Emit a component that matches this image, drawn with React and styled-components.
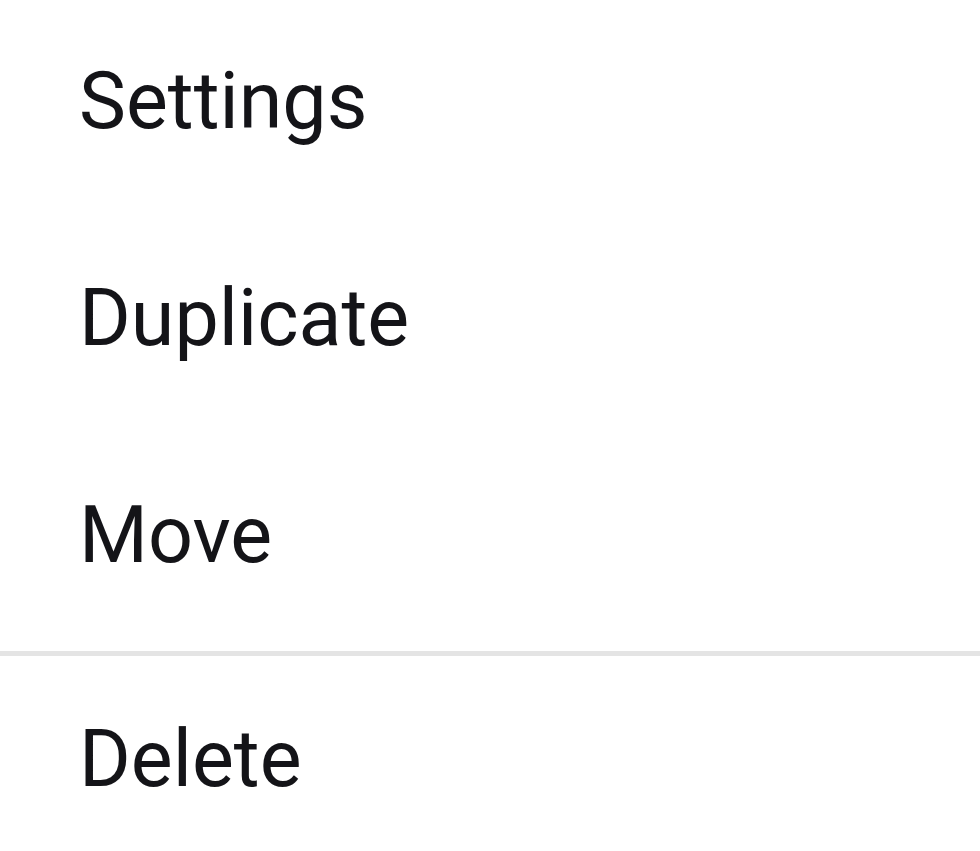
import styled, { createGlobalStyle } from "styled-components"

const Global = createGlobalStyle`
    html, body {
        margin: 0;
        padding: 0;
        background: #ffffff;
    }
`

const Menu = styled.ul`
    list-style: none;
    margin: 0;
    padding: 0;
    width: 980px;
    font-family: Roboto, "Noto Sans", sans-serif;
`

const Item = styled.li`
    display: flex;
    align-items: center;
    height: 217px;
    padding: ${props => props.last ? '4px' : '0'} 0 15px 79px;
    box-sizing: border-box;
    font-size: 79px;
    line-height: 1;
    color: #141418;
`

const Divider = styled.li`
    height: 5px;
    background: #e4e4e4;
`

export default function App() {
    return (
        <>
            <Global />
            <Menu>
                <Item>Settings</Item>
                <Item>Duplicate</Item>
                <Item>Move</Item>
                <Divider />
                <Item last>Delete</Item>
            </Menu>
        </>
    )
}
